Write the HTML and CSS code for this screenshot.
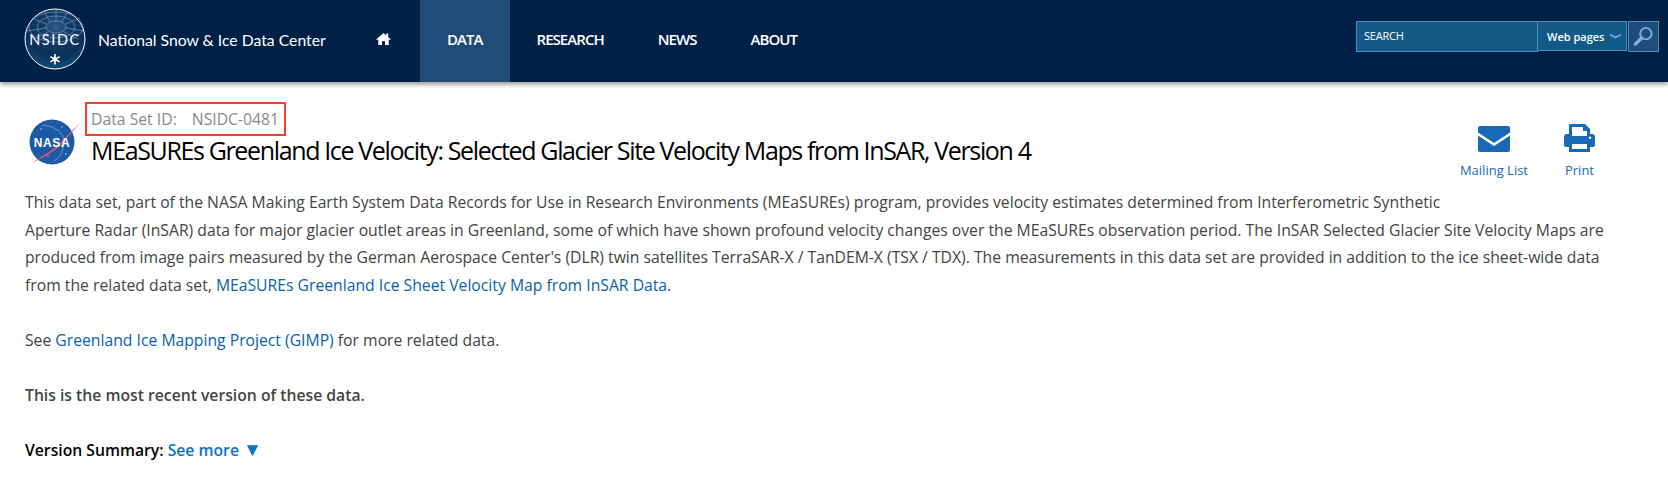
FILE: index.html
```html
<!DOCTYPE html>
<html lang="en">
<head>
    <meta charset="UTF-8">
    <meta name="viewport" content="width=device-width, initial-scale=1.0">
    <title>MEaSUREs Greenland Ice Velocity | NSIDC</title>
    <link rel="stylesheet" href="styles.css">
</head>
<body>

    <!-- Site header -->
    <header class="site-header">
        <a class="brand" href="#">
            <svg class="brand-logo" viewBox="0 0 62 62" width="62" height="62">
                <defs>
                    <radialGradient id="globe" cx="0.52" cy="0.3" r="0.75">
                        <stop offset="0" stop-color="#2f5f8c"/>
                        <stop offset="0.3" stop-color="#123c69"/>
                        <stop offset="0.65" stop-color="#0a3158"/>
                        <stop offset="1" stop-color="#0c5480"/>
                    </radialGradient>
                </defs>
                <circle cx="31" cy="31" r="30" fill="url(#globe)" stroke="#fff" stroke-width="1"/>
                <g fill="none" stroke="#a9c0d6" stroke-width="0.45">
                    <ellipse cx="32" cy="19" rx="10" ry="6"/>
                    <ellipse cx="32" cy="19" rx="19" ry="11"/>
                    <ellipse cx="32" cy="19" rx="27" ry="15"/>
                    <path d="M32 1V13M20 3L26 14M44 3L38 14M8 10L22 16M56 10L42 16M3 23L22 20M60 23L42 20M10 31L24 24M54 31L40 24"/>
                </g>
                <text class="logo-text" x="31" y="37" text-anchor="middle">NSIDC</text>
                <g stroke="#fff" stroke-width="1.6">
                    <path d="M31 46V56.5M26.4 48.6L35.6 53.9M35.6 48.6L26.4 53.9"/>
                </g>
                <circle cx="31" cy="51.2" r="2.2" fill="#fff"/>
            </svg>
            <span class="brand-name">National Snow &amp; Ice Data Center</span>
        </a>

        <nav class="main-nav">
            <a class="nav-home" href="#" aria-label="Home">
                <svg viewBox="0 0 16 14" width="15" height="14">
                    <path fill="#fff" d="M8 0.5L0.3 7.2 1.2 8.2 2.4 7.2V13.5H6.4V9.4H9.6V13.5H13.6V7.2L14.8 8.2 15.7 7.2 13 4.9V1.2H11V3.2Z"/>
                </svg>
            </a>
            <a class="nav-link active" href="#">DATA</a>
            <a class="nav-link" href="#">RESEARCH</a>
            <a class="nav-link" href="#">NEWS</a>
            <a class="nav-link" href="#">ABOUT</a>
        </nav>

        <form class="search">
            <div class="search-input">SEARCH</div>
            <div class="search-scope">
                Web pages
                <svg viewBox="0 0 12 6" width="11" height="6">
                    <path fill="#6ea6dc" d="M0 0.5L6 3.4 12 0.5V2.4L6 5.6 0 2.4Z"/>
                </svg>
            </div>
            <button class="search-btn" type="button" aria-label="Search">
                <svg viewBox="0 0 22 22" width="21" height="21">
                    <circle cx="13.5" cy="8" r="6" fill="none" stroke="#7ab0e4" stroke-width="2"/>
                    <path d="M9 12.5L2.5 19" stroke="#7ab0e4" stroke-width="3.6" stroke-linecap="round"/>
                </svg>
            </button>
        </form>
    </header>

    <main class="content">
        <div class="title-row">
            <svg class="nasa-logo" viewBox="0 0 54 46" width="54" height="46">
                <circle cx="24" cy="23" r="22.5" fill="#1c5aa6"/>
                <g fill="#fff">
                    <circle cx="13" cy="10" r="0.7"/>
                    <circle cx="34" cy="8" r="0.6"/>
                    <circle cx="20" cy="37" r="0.6"/>
                    <circle cx="38" cy="35" r="0.7"/>
                </g>
                <path d="M14 6Q36 8 36 24 34 38 26 42" fill="none" stroke="#b9cde6" stroke-width="0.5"/>
                <path d="M4 44L27 29 53 3 32 27Q20 37 4 44Z" fill="#e2546a"/>
                <text class="nasa-text" x="24" y="28" text-anchor="middle">NASA</text>
            </svg>
            <div class="title-text">
                <div class="dataset-id"><span>Data Set ID:</span><span>NSIDC-0481</span></div>
                <h1>MEaSUREs Greenland Ice Velocity: Selected Glacier Site Velocity Maps from InSAR, Version 4</h1>
            </div>
            <div class="actions">
                <a class="action" href="#">
                    <svg viewBox="0 0 32 26" width="32" height="26">
                        <path fill="#1a69b8" d="M2 0H30Q32 0 32 2V6.5L16 17 0 6.5V2Q0 0 2 0Z"/>
                        <path fill="#1a69b8" d="M0 9.5L16 20 32 9.5V24Q32 26 30 26H2Q0 26 0 24Z"/>
                    </svg>
                    Mailing List
                </a>
                <a class="action" href="#">
                    <svg viewBox="0 0 31 28" width="31" height="28">
                        <path fill="#1a69b8" fill-rule="evenodd" d="M6 0H21L26 5V10H28Q31 10 31 13V21Q31 23 29 23H26V28H5V23H2Q0 23 0 21V13Q0 10 3 10H5V2Q5 0 6 0ZM8 3V12H23V7H19V3ZM8 20V25H23V20ZM26 12.5A1.2 1.2 0 1 0 26 15 1.2 1.2 0 1 0 26 12.5Z"/>
                    </svg>
                    Print
                </a>
            </div>
        </div>

        <p class="summary">
            This data set, part of the NASA Making Earth System Data Records for Use in Research Environments (MEaSUREs) program, provides velocity estimates determined from Interferometric Synthetic<br>
            Aperture Radar (InSAR) data for major glacier outlet areas in Greenland, some of which have shown profound velocity changes over the MEaSUREs observation period. The InSAR Selected Glacier Site Velocity Maps are<br>
            produced from image pairs measured by the German Aerospace Center's (DLR) twin satellites TerraSAR-X / TanDEM-X (TSX / TDX). The measurements in this data set are provided in addition to the ice sheet-wide data<br>
            from the related data set, <a href="#">MEaSUREs Greenland Ice Sheet Velocity Map from InSAR Data</a>.<br><br>
            See <a href="#">Greenland Ice Mapping Project (GIMP)</a> for more related data.<br><br>
            <strong>This is the most recent version of these data.</strong><br><br>
            <span class="version-label">Version Summary:</span> <a class="see-more" href="#">See more <span class="see-more-arrow">&#9660;</span></a>
        </p>
    </main>

</body>
</html>
```

FILE: styles.css
```css
* {
    box-sizing: border-box;
}

body {
    margin: 0;
    font-family: "Open Sans", Arial, sans-serif;
    color: #444;
    background: #fff;
    overflow: hidden;
}

a {
    text-decoration: none;
}

/* Header */
.site-header {
    display: flex;
    height: 82px;
    padding-left: 24px;
    padding-right: 9px;
    background: #002147;
    box-shadow: 0 2px 5px rgba(0, 0, 0, 0.45);
}

.brand {
    display: flex;
    align-items: center;
    gap: 12px;
    width: 336px;
    padding-bottom: 4px;
    color: #fff;
}

.brand-logo {
    flex: none;
}

.logo-text {
    font-family: Lato, sans-serif;
    font-size: 14.5px;
    letter-spacing: 1.6px;
    fill: #fff;
}

.brand-name {
    font-family: Lato, sans-serif;
    font-size: 15.75px;
    white-space: nowrap;
}

.main-nav {
    display: flex;
    flex: 1;
}

.nav-home {
    display: flex;
    align-items: center;
    width: 60px;
    padding-left: 16px;
    padding-bottom: 4px;
}

.nav-link {
    display: flex;
    align-items: center;
    padding: 0 27px 4px;
    color: #fff;
    font-size: 15px;
    font-weight: 600;
    letter-spacing: -0.95px;
}

.nav-link.active {
    background: #1f4c79;
}

.search {
    display: flex;
    align-items: flex-start;
    padding-top: 21px;
    font-size: 11px;
    color: #fff;
}

.search-input {
    width: 182px;
    height: 31px;
    padding: 6px 7px;
    background: #125a88;
    border: 1px solid #4a8cc4;
    letter-spacing: -0.2px;
}

.search-scope {
    display: flex;
    align-items: center;
    gap: 6px;
    width: 89px;
    height: 30px;
    padding-left: 9px;
    background: #125a88;
    border: 1px solid #4a8cc4;
    border-left: 0;
    font-weight: 600;
    white-space: nowrap;
}

.search-btn {
    display: flex;
    align-items: center;
    justify-content: center;
    width: 31px;
    height: 31px;
    padding: 0;
    margin-left: 1px;
    background: #1f4c79;
    border: 1px solid #4a8cc4;
}

/* Page content */
.content {
    padding: 0 25px;
}

.title-row {
    display: flex;
    height: 99px;
    padding-top: 20px;
}

.nasa-logo {
    flex: none;
    margin: 17px 9px 0 3px;
}

.nasa-text {
    font-family: "Liberation Sans", sans-serif;
    font-size: 12px;
    font-weight: 700;
    letter-spacing: 0.6px;
    fill: #fff;
}

.dataset-id {
    display: flex;
    gap: 15px;
    width: 201px;
    height: 34px;
    margin-left: -6px;
    padding: 3px 0 0 4px;
    border: 2px solid #f4402e;
    color: #8a8a8a;
    font-size: 15.75px;
    line-height: 24px;
    white-space: nowrap;
}

.title-text h1 {
    margin: -3px 0 0;
    font-size: 25px;
    font-weight: 400;
    line-height: 34px;
    letter-spacing: -1.36px;
    color: #000;
    white-space: nowrap;
}

.actions {
    display: flex;
    gap: 36px;
    margin-left: auto;
    margin-right: 48px;
    padding-top: 17px;
}

.action {
    display: flex;
    flex-direction: column;
    align-items: center;
    justify-content: flex-end;
    gap: 9px;
    height: 60px;
    color: #1a69b8;
    font-size: 13px;
    line-height: 18px;
}

.summary {
    margin: 8px 0 0;
    font-size: 15.73px;
    line-height: 27.55px;
    white-space: nowrap;
}

.summary a {
    color: #0b62ae;
}

.summary strong {
    font-weight: 600;
}

.version-label {
    color: #000;
    font-weight: 600;
}

.summary a.see-more {
    color: #0873c4;
    font-weight: 600;
}

.see-more-arrow {
    font-size: 19px;
    line-height: 1;
}
```
